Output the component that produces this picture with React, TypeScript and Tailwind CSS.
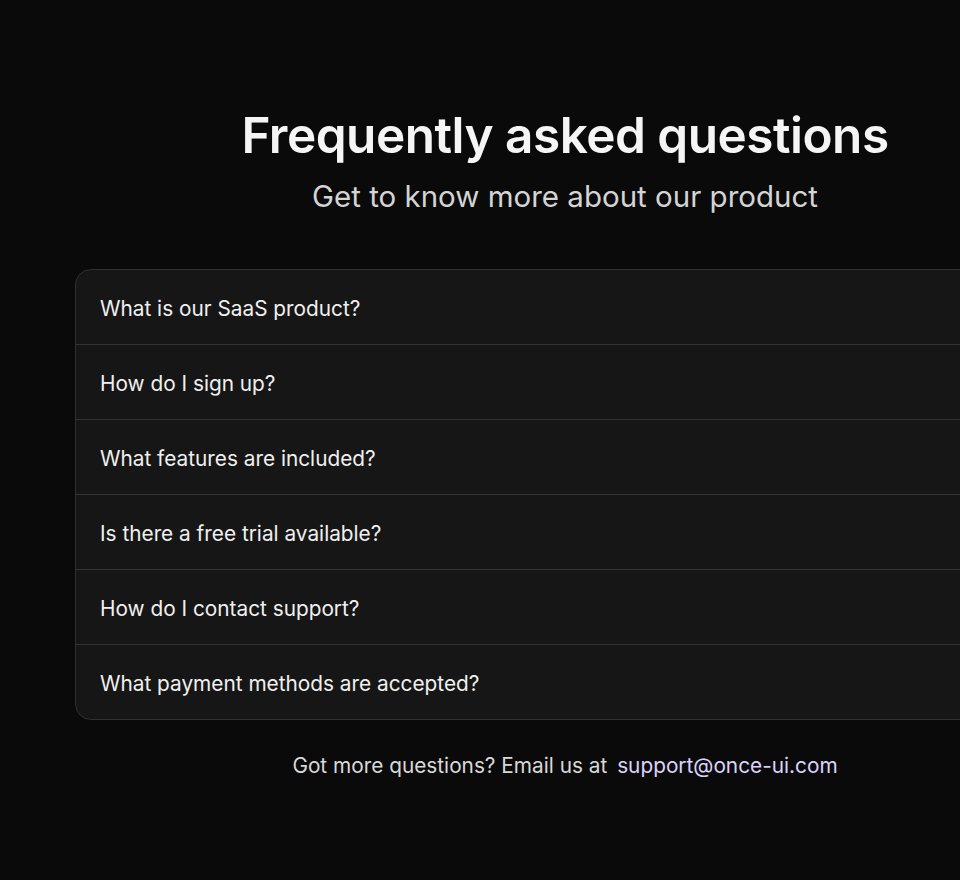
import React from "react";

const questions = [
  "What is our SaaS product?",
  "How do I sign up?",
  "What features are included?",
  "Is there a free trial available?",
  "How do I contact support?",
  "What payment methods are accepted?",
];

export default function App() {
  return (
    <div
      className="w-full h-[880px] bg-[#0a0a0a] overflow-hidden text-white"
      style={{ fontFamily: "Inter, 'Noto Sans', sans-serif" }}
    >
      <div className="ml-[75px] w-[980px] flex flex-col items-center pt-[105px]">
        <h1 className="text-[49.5px] leading-[60px] font-semibold tracking-[-0.01em] text-[#f5f5f5]">
          Frequently asked questions
        </h1>
        <p className="mt-[12px] text-[29.5px] leading-[38px] text-[#d4d4d4]">
          Get to know more about our product
        </p>
        <div className="mt-[54px] w-full rounded-[16px] border border-[#303030] bg-[#161616] overflow-hidden">
          {questions.map((q, i) => (
            <div
              key={q}
              className={
                "flex items-center pl-[24px] pt-[3px] text-[20.8px] text-[#f0f0f0] " +
                (i > 0 ? "h-[75px] border-t border-[#333333]" : "h-[74px]")
              }
            >
              {q}
            </div>
          ))}
        </div>
        <p className="mt-[32px] text-[20.8px] leading-[28px] text-[#d9d9d9]">
          Got more questions? Email us at{" "}
          <span className="ml-[4px] text-[#dcd3fb]">support@once-ui.com</span>
        </p>
      </div>
    </div>
  );
}
